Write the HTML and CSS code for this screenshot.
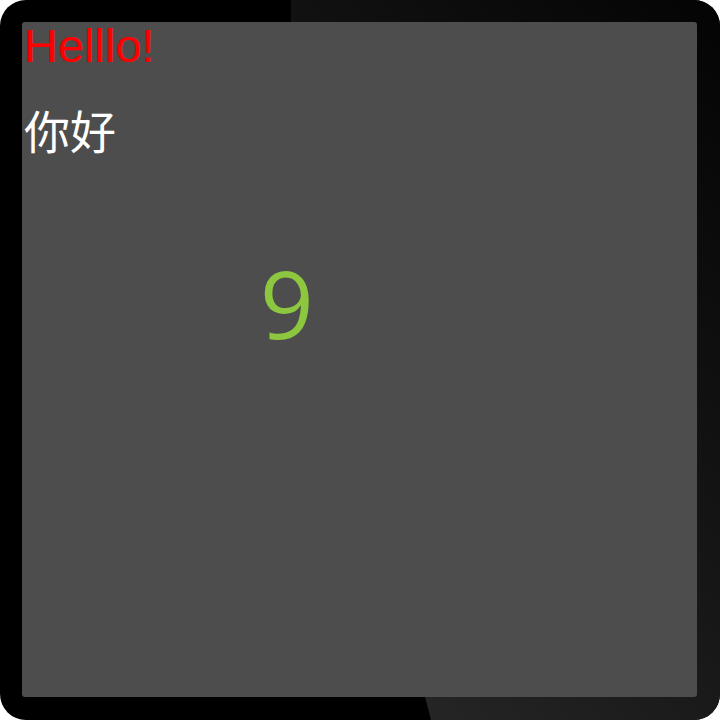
FILE: index.html
```html
<!DOCTYPE html>
<html lang="zh">
<head>
<meta charset="utf-8">
<title>Device</title>
<link rel="stylesheet" href="styles.css">
</head>
<body>
<div class="device">
  <div class="shine"></div>
  <div class="screen">
    <div class="greet">Helllo!</div>
    <div class="hello-cn">你好</div>
    <div class="digit">9</div>
  </div>
</div>
</body>
</html>
```
FILE: styles.css
```css
html, body {
  margin: 0;
  padding: 0;
  background: #ffffff;
}

.device {
  position: relative;
  width: 720px;
  height: 720px;
  box-sizing: border-box;
  padding: 22px 23px 23px 22px;
  background: #000000;
  border-radius: 26px;
  overflow: hidden;
}

.shine {
  position: absolute;
  inset: 0;
  background: linear-gradient(to top right, #353535 0%, #1a1a1a 50%, #040404 100%);
  clip-path: polygon(291px 0, 100% 0, 100% 100%, 431px 100%, 425px 697px, 291px 22px);
}

.screen {
  position: relative;
  z-index: 1;
  height: 100%;
  box-sizing: border-box;
  padding-left: 2px;
  background: #4d4d4d;
  border-radius: 3px;
  display: flex;
  flex-direction: column;
  align-items: flex-start;
}

.greet {
  font-family: "Liberation Sans", Arial, sans-serif;
  font-size: 47px;
  line-height: 1;
  color: #ff0000;
}

.hello-cn {
  margin-top: 37px;
  font-family: "Noto Sans CJK SC", sans-serif;
  font-size: 46px;
  line-height: 1;
  color: #ffffff;
}

.digit {
  margin-top: 104px;
  margin-left: 236px;
  font-family: "Open Sans", sans-serif;
  font-size: 94px;
  line-height: 1;
  color: #8dc63f;
}
```
